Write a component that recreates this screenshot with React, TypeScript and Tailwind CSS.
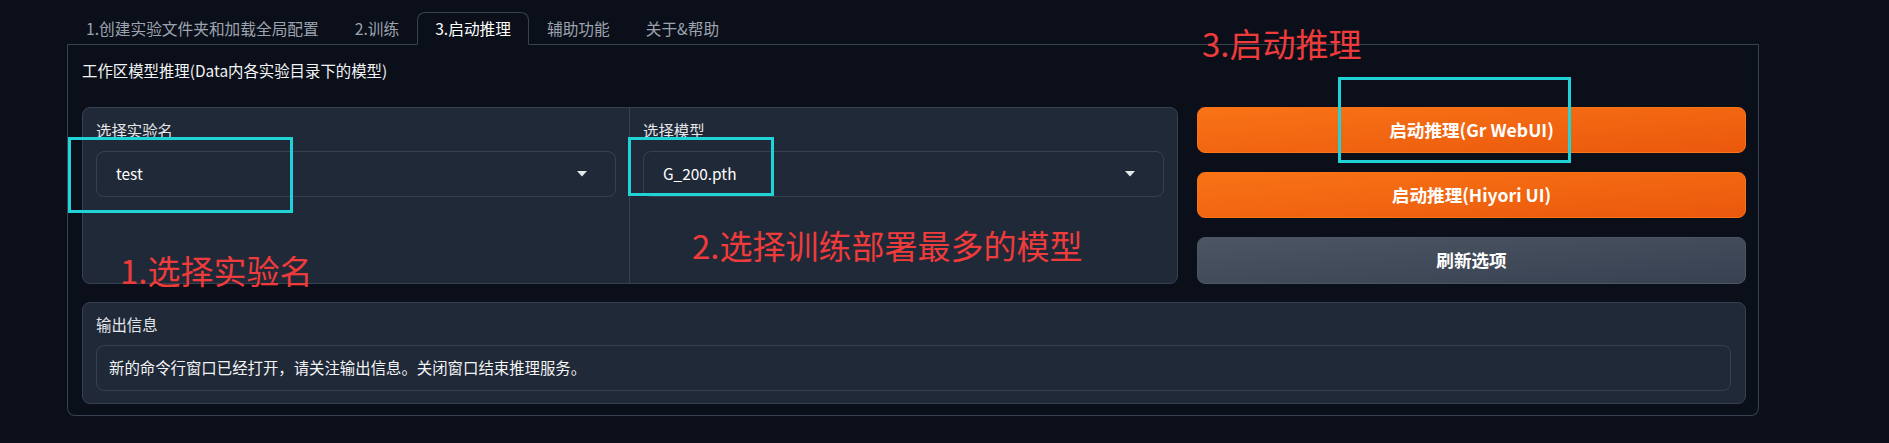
import React from 'react';

const tabs = ['1.创建实验文件夹和加载全局配置', '2.训练', '3.启动推理', '辅助功能', '关于&帮助'];

const Caret = () => (
  <svg width="10" height="6" viewBox="0 0 10 6" className="shrink-0">
    <path d="M0 0 L10 0 L5 5.5 Z" fill="#e5e7eb" />
  </svg>
);

const Dropdown: React.FC<{ label: string; value: string }> = ({ label, value }) => (
  <div className="px-[13px] pt-[12px]">
    <div className="text-[15.4px] leading-[20px] text-[#e5e7eb] mb-[11px]">{label}</div>
    <div className="h-[46px] flex items-center justify-between rounded-lg border border-[#374151] pl-[19px] pr-[28px] text-[15.4px] text-white">
      <span>{value}</span>
      <Caret />
    </div>
  </div>
);

const App: React.FC = () => {
  return (
    <div
      className="relative min-h-screen w-full bg-[#0b0f19] text-[#e5e7eb]"
      style={{ fontFamily: '"Noto Sans CJK SC", "Noto Sans", sans-serif' }}
    >
      <div className="pl-[67px] pr-[130px] pt-[12px]">
        <div className="flex items-end border-b border-[#374151] pl-px">
          {tabs.map((t, i) => (
            <button
              key={t}
              className={
                i === 2
                  ? 'h-[33px] -mb-px px-[17px] rounded-t-lg border border-[#374151] border-b-[#0b0f19] bg-[#0b0f19] text-[15.7px] text-white'
                  : 'h-[33px] -mb-px px-[17px] border border-transparent text-[15.7px] text-[#9ca3af]'
              }
            >
              {t}
            </button>
          ))}
        </div>

        <div className="border-x border-b border-[#374151] rounded-b-lg pl-[14px] pr-[12px] pt-[14px] pb-[11px]">
          <div className="text-[15.4px] leading-[22px] text-[#f3f4f6]">工作区模型推理(Data内各实验目录下的模型)</div>

          <div className="flex gap-[19px] mt-[26px]">
            <div className="w-[1096px] h-[177px] grid grid-cols-2 divide-x divide-[#374151] rounded-lg border border-[#374151] bg-[#202937]">
              <Dropdown label="选择实验名" value="test" />
              <Dropdown label="选择模型" value="G_200.pth" />
            </div>

            <div className="flex-1 flex flex-col gap-[19px]">
              <button className="h-[46px] rounded-lg border border-[#f97316] bg-gradient-to-br from-[#f97316] to-[#ea580c] text-[17.6px] font-bold text-white">
                启动推理(Gr WebUI)
              </button>
              <button className="h-[46px] rounded-lg border border-[#f97316] bg-gradient-to-br from-[#f97316] to-[#ea580c] text-[17.6px] font-bold text-white">
                启动推理(Hiyori UI)
              </button>
              <button className="h-[47px] rounded-lg border border-[#4b5563] bg-gradient-to-br from-[#4b5563] to-[#374151] text-[17.6px] font-bold text-white">
                刷新选项
              </button>
            </div>
          </div>

          <div className="mt-[18px] rounded-lg border border-[#374151] bg-[#202937] pl-[13px] pr-[14px] pt-[11px] pb-[12px]">
            <div className="text-[15.4px] leading-[20px] text-[#e5e7eb] mb-[11px]">输出信息</div>
            <div className="h-[46px] flex items-center rounded-lg border border-[#374151] pl-[12px] text-[15.4px] text-[#f3f4f6]">
              新的命令行窗口已经打开，请关注输出信息。关闭窗口结束推理服务。
            </div>
          </div>
        </div>
      </div>

      {/* annotation overlay */}
      <div className="absolute left-[68px] top-[137px] w-[225px] h-[76px] border-[3px] border-[#1fd3d6]" />
      <div className="absolute left-[628px] top-[137px] w-[146px] h-[59px] border-[3px] border-[#1fd3d6]" />
      <div className="absolute left-[1338px] top-[77px] w-[233px] h-[86px] border-[3px] border-[#1fd3d6]" />

      <div className="absolute left-[120px] top-[254px] text-[33px] leading-none text-[#ef3b3b]">1.选择实验名</div>
      <div className="absolute left-[692px] top-[229px] text-[33px] leading-none text-[#ef3b3b]">2.选择训练部署最多的模型</div>
      <div className="absolute left-[1202px] top-[27px] text-[33px] leading-none text-[#ef3b3b]">3.启动推理</div>
    </div>
  );
};

export default App;
